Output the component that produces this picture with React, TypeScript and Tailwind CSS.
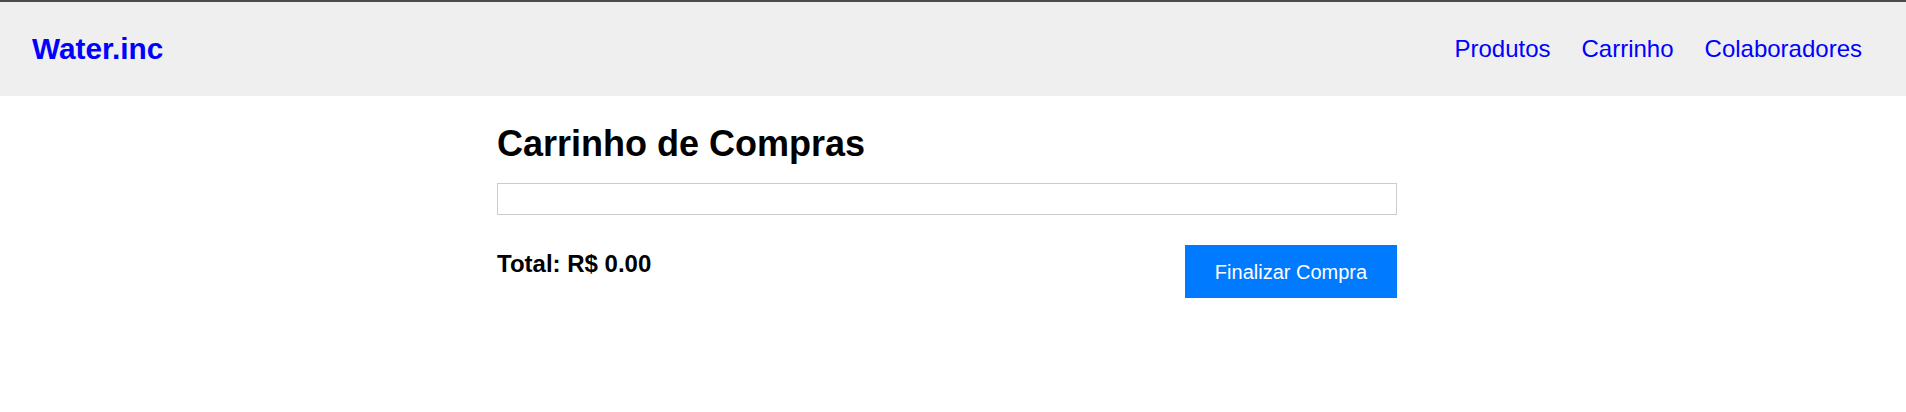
export default function App() {
  return (
    <div className="min-h-[412px] bg-white" style={{ fontFamily: '"Liberation Sans", Arial, sans-serif' }}>
      <div className="h-[2px] bg-[#4b4b4b]" />
      <header className="flex h-[94px] items-center justify-between bg-[#efefef] pl-[32px] pr-[44px]">
        <div className="text-[29.8px] font-bold leading-none text-[#0000ff]">Water.inc</div>
        <nav className="flex gap-[31px] text-[24px] leading-none text-[#0000ff]">
          <a href="#">Produtos</a>
          <a href="#">Carrinho</a>
          <a href="#">Colaboradores</a>
        </nav>
      </header>
      <main className="flex justify-center pr-[12px] pt-[28px]">
        <div className="w-[900px]">
          <h1 className="text-[36px] font-bold leading-[40px] text-black">Carrinho de Compras</h1>
          <div className="mt-[19px] h-[32px] border border-[#cccccc]" />
          <div className="mt-[30px] flex items-start justify-between">
            <div className="mt-[5px] text-[24px] font-bold leading-[27px] text-black">Total: R$ 0.00</div>
            <button className="flex h-[53px] w-[212px] items-center justify-center bg-[#007bff] text-[20px] text-white">
              Finalizar Compra
            </button>
          </div>
        </div>
      </main>
    </div>
  );
}
